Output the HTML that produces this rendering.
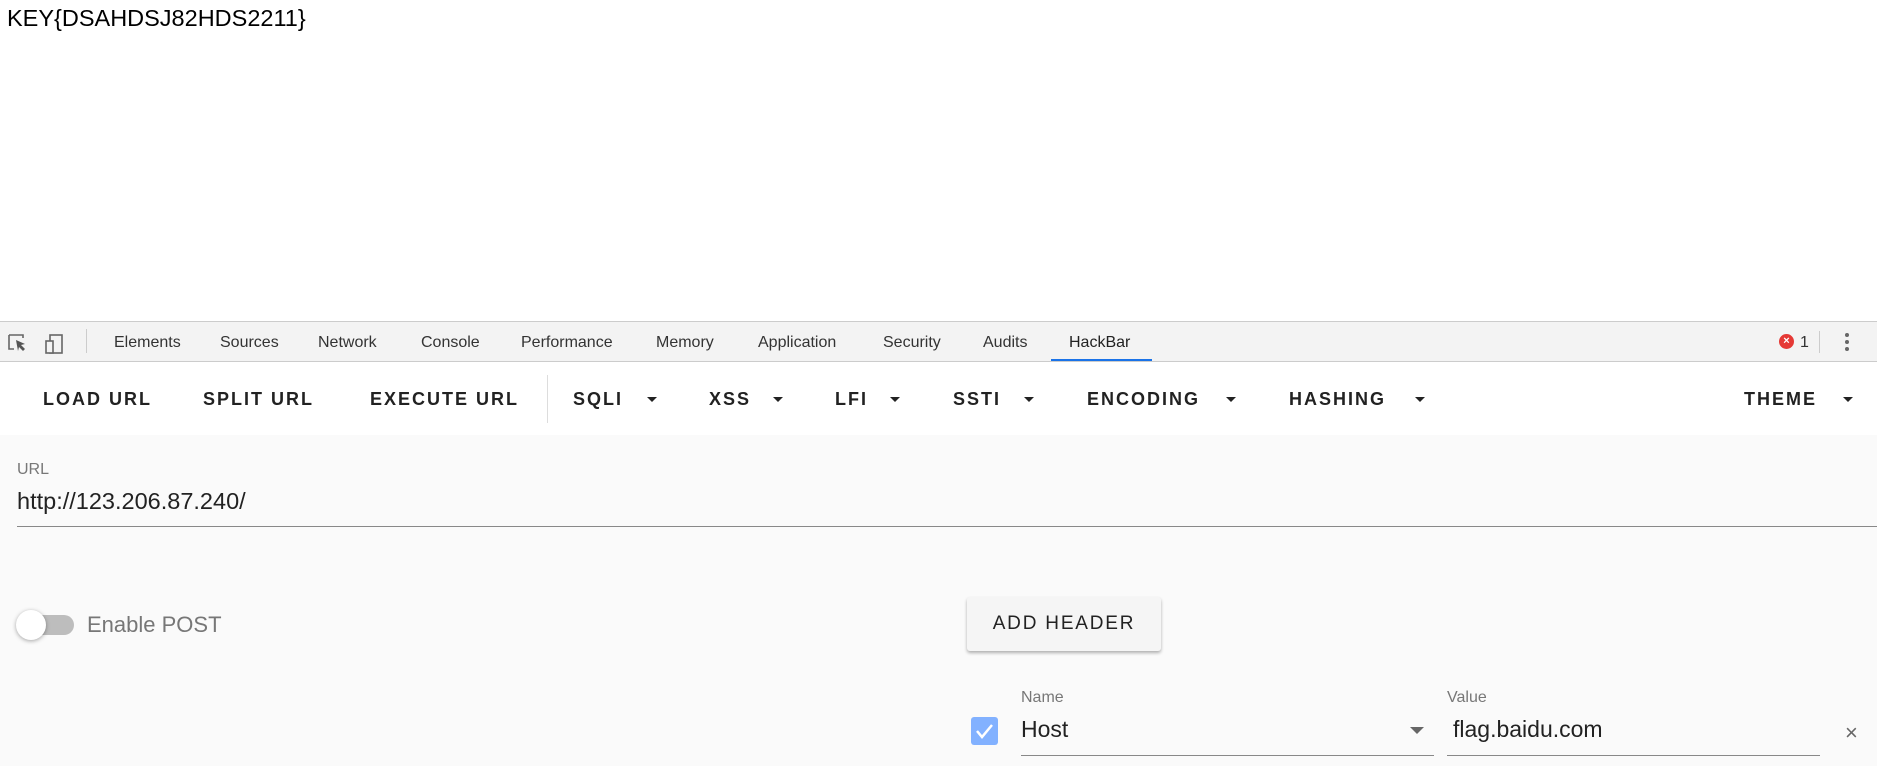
<!DOCTYPE html>
<html><head><meta charset="utf-8"><style>
*{margin:0;padding:0;box-sizing:border-box}
body{width:1877px;height:766px;overflow:hidden;background:#fff;position:relative;font-family:"Liberation Sans",sans-serif}
.a{position:absolute;white-space:nowrap}
.tab{position:absolute;top:334px;font-size:16px;color:#333}
.btn{position:absolute;top:389px;font-size:18px;font-weight:bold;letter-spacing:2px;color:#222}
.arr{position:absolute;top:397px;width:0;height:0;border-left:5px solid transparent;border-right:5px solid transparent;border-top:5px solid #222}
</style></head><body>
<div class="a" style="left:7px;top:5px;font-size:23.5px;color:#000">KEY{DSAHDSJ82HDS2211}</div>

<div class="a" style="left:0;top:321px;width:1877px;height:41px;background:#f3f3f3;border-top:1px solid #ccc;border-bottom:1px solid #ccc"></div>
<svg class="a" style="left:6px;top:330px" width="80" height="26" viewBox="0 0 80 26">
<path d="M3 5h14v3M3 5v14h5" fill="none" stroke="#666" stroke-width="1.6"/>
<path d="M10 10l9 4-4 1 4 4-2 2-4-4-1 4z" fill="#555"/>
<rect x="44" y="5" width="12" height="18" fill="none" stroke="#666" stroke-width="1.6"/>
<rect x="40" y="11" width="7" height="12" fill="#f3f3f3" stroke="#666" stroke-width="1.6"/>
</svg>
<div class="a" style="left:86px;top:329px;width:1px;height:24px;background:#ccc"></div>
<div class="tab" style="left:114px">Elements</div>
<div class="tab" style="left:220px">Sources</div>
<div class="tab" style="left:318px">Network</div>
<div class="tab" style="left:421px">Console</div>
<div class="tab" style="left:521px">Performance</div>
<div class="tab" style="left:656px">Memory</div>
<div class="tab" style="left:758px">Application</div>
<div class="tab" style="left:883px">Security</div>
<div class="tab" style="left:983px">Audits</div>
<div class="tab" style="left:1069px;color:#222">HackBar</div>
<div class="a" style="left:1051px;top:359px;width:101px;height:2px;background:#1a73e8"></div>
<div class="a" style="left:1779px;top:334px;width:15px;height:15px;border-radius:50%;background:#e53935;color:#fff;font-size:11px;font-weight:bold;text-align:center;line-height:15px">×</div>
<div class="tab" style="left:1800px;color:#333">1</div>
<div class="a" style="left:1819px;top:331px;width:1px;height:22px;background:#ccc"></div>
<div class="a" style="left:1845px;top:333px;width:4px;height:4px;border-radius:2px;background:#666;box-shadow:0 7px 0 #666,0 14px 0 #666"></div>

<div class="a" style="left:0;top:435px;width:1877px;height:331px;background:#fafafa"></div>
<div class="btn" style="left:43px">LOAD URL</div>
<div class="btn" style="left:203px">SPLIT URL</div>
<div class="btn" style="left:370px">EXECUTE URL</div>
<div class="a" style="left:547px;top:375px;width:1px;height:48px;background:#ddd"></div>
<div class="btn" style="left:573px">SQLI</div><div class="arr" style="left:647px"></div>
<div class="btn" style="left:709px">XSS</div><div class="arr" style="left:773px"></div>
<div class="btn" style="left:835px">LFI</div><div class="arr" style="left:890px"></div>
<div class="btn" style="left:953px">SSTI</div><div class="arr" style="left:1024px"></div>
<div class="btn" style="left:1087px">ENCODING</div><div class="arr" style="left:1226px"></div>
<div class="btn" style="left:1289px">HASHING</div><div class="arr" style="left:1415px"></div>
<div class="btn" style="left:1744px">THEME</div><div class="arr" style="left:1843px"></div>

<div class="a" style="left:17px;top:461px;font-size:16px;color:#777">URL</div>
<div class="a" style="left:17px;top:488px;font-size:23.5px;color:#222">http://123.206.87.240/</div>
<div class="a" style="left:17px;top:526px;width:1860px;height:1px;background:#888"></div>

<div class="a" style="left:17px;top:615px;width:57px;height:20px;border-radius:10px;background:#bdbdbd"></div>
<div class="a" style="left:16px;top:610px;width:30px;height:30px;border-radius:50%;background:#fff;box-shadow:0 1px 4px rgba(0,0,0,.35)"></div>
<div class="a" style="left:87px;top:612px;font-size:22px;color:#777">Enable POST</div>

<div class="a" style="left:967px;top:597px;width:194px;height:54px;background:#f5f5f5;border-radius:3px;box-shadow:0 2px 3px rgba(0,0,0,.3);font-size:19px;letter-spacing:1.8px;color:#222;text-align:center;line-height:54px">ADD HEADER</div>

<div class="a" style="left:971px;top:717px;width:27px;height:28px;border-radius:3px;background:#82b1ff"></div>
<svg class="a" style="left:971px;top:717px" width="27" height="28"><path d="M6 14l5 6 10-12" fill="none" stroke="#fff" stroke-width="2.5"/></svg>
<div class="a" style="left:1021px;top:689px;font-size:16px;color:#777">Name</div>
<div class="a" style="left:1021px;top:716px;font-size:23px;color:#222">Host</div>
<div class="arr" style="left:1410px;top:727px;border-left-width:7px;border-right-width:7px;border-top-width:7px;border-top-color:#666"></div>
<div class="a" style="left:1021px;top:755px;width:413px;height:1px;background:#888"></div>
<div class="a" style="left:1447px;top:689px;font-size:16px;color:#777">Value</div>
<div class="a" style="left:1453px;top:716px;font-size:23px;color:#222">flag.baidu.com</div>
<div class="a" style="left:1447px;top:755px;width:373px;height:1px;background:#888"></div>
<div class="a" style="left:1845px;top:720px;font-size:22px;color:#666">×</div>
</body></html>
